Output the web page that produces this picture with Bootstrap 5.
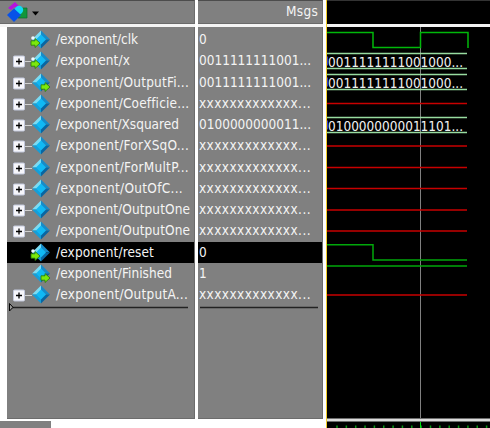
<!DOCTYPE html>
<html lang="en">
<head>
<meta charset="utf-8">
<title>Wave</title>
<link href="https://cdn.jsdelivr.net/npm/bootstrap@5.3.0/dist/css/bootstrap.min.css" rel="stylesheet">
<style>
body{width:490px;height:428px;background:#fff;font-family:"DejaVu Sans Condensed","DejaVu Sans",sans-serif;font-stretch:condensed;font-size:13.5px;color:#f4f4f4}
.pane{background:#808080}
.names{width:195px}
.vals{width:125px;margin-left:3px}
.waves{width:164px;background:#000;border-left:1px solid #f2cd28}
.gap3{width:3px}
.top-bar{height:24px;border-top:1px solid #4c4c4c;border-bottom:1px solid #6a6a6a}
.names .pane,.vals .pane{border-right:1px solid #6c6c6c}
.rule{height:3px;background:#f4f4f4}
.listing{height:392px;border-bottom:1px solid #6c6c6c;padding-top:2px}
.names .listing{margin-left:7px}
.sig{height:21.25px;line-height:20px;white-space:pre}
.sig.active{background:#000}
.names .sig{padding-left:21px}
.vals .sig{padding-left:1px}
.gem{width:27px;height:21px;margin-right:1px;overflow:visible}
.endline{height:9px;margin-top:-2.5px}
.foot{height:9px;padding-top:2px}
.thumb{width:51px;height:7px;background:#808080}
svg{display:block;flex:none}
</style>
<script src="https://cdn.jsdelivr.net/npm/bootstrap@5.3.0/dist/js/bootstrap.bundle.min.js"></script>
</head>
<body class="m-0 overflow-hidden">
<svg width="0" height="0" class="position-absolute">
<defs>
<g id="gem"><path d="M0 9L9 0V6L6 9Z" fill="#7bdcf4"/><path d="M9 0L18 9H12L9 6Z" fill="#168bc8"/><path d="M0 9H6L9 12V18Z" fill="#159ed8"/><path d="M18 9L9 18V12L12 9Z" fill="#0866a2"/><path d="M9 4L14 9L9 14L4 9Z" fill="#10b9f4"/></g>
<path id="arrow" d="M0 2.3H4V0L9 4.5L4 9V6.7H0Z" fill="#7be80c" stroke="#26790b" stroke-width=".8"/>
</defs></svg>
<main class="d-flex h-100">
<section class="names flex-shrink-0">
<header class="pane top-bar d-flex align-items-start">
<svg width="42" height="22"><path d="M8 7L15 1L20 6L17 8L15 6L11 9Z" fill="#b414dc"/><path d="M19 7H27V17H18Z" fill="#12963c" stroke="#0a6d2b" stroke-width=".7"/><circle cx="19" cy="9" r="4.2" fill="#10d9f5"/><path d="M14 7.500L21 14L14 21L7 14Z" fill="#0752e8"/><path d="M32 10.5H39L35.500 14.500Z" fill="#000"/></svg>
</header>
<div class="rule"></div>
<div class="pane listing" id="names"></div>
<div class="foot"><div class="thumb"></div></div>
</section>
<section class="vals flex-shrink-0">
<header class="pane top-bar text-end lh-base pe-1"><span class="fit" data-w="32">Msgs</span></header>
<div class="rule"></div>
<div class="pane listing" id="vals"></div>
</section>
<div class="gap3 flex-shrink-0"></div>
<section class="waves flex-shrink-0"><svg id="wave" width="163" height="428" viewBox="327 0 163 428"></svg></section>
</main>
<script>
const X='xxxxxxxxxxxxx...';
const signals=[
 ['clk',82,'0',8,'in'],['x',74,'0011111111001...',112,'in',1],['OutputFi...',133,'0011111111001...',112,'out',1],
 ['Coefficie...',133,X,112,'',1],['Xsquared',123,'0100000000011...',112,'',1],['ForXSqO...',133,X,112,'',1],
 ['ForMultP...',133,X,112,'',1],['OutOfC...',127,X,112,'',1],['OutputOne',134,X,112,'',1],['OutputOne',134,X,112,'',1],
 ['reset',98,'0',8,'in'],['Finished',116,'1',8,'out'],['OutputA...',132,X,112,'',1]];
let n='',v='';
signals.forEach(([name,w,val,vw,dir,exp],i)=>{
 const on=i===10?' active':'';
 const plus=exp?'<path d="M-3 11.500H4" stroke="#d0d0d0"/><rect x="-14.500" y="6" width="11" height="11" rx="1" fill="#f6f6fb" stroke="#c2c8dc"/><path d="M-12 11.500H-6M-9 8.500V14.500" stroke="#000" stroke-width="1.300"/>':'';
 const arrow=dir==='in'?'<circle cx="5" cy="9" r="1.8" fill="#eefaff"/><use href="#arrow" x="3" y="9.500"/>':dir==='out'?'<use href="#arrow" x="13" y="10.500"/>':'';
 n+=`<div class="sig d-flex${on}"><svg class="gem" viewBox="0 0 27 21">${plus}<use href="#gem" x="4" y="1.500"/>${arrow}</svg><span class="fit" data-w="${w}">/exponent/${name}</span></div>`;
 v+=`<div class="sig${on}"><span class="fit" data-w="${vw}">${val}</span></div>`;
});
document.getElementById('names').innerHTML=n+'<svg class="endline" width="185" height="9"><path d="M3 4.500H181" stroke="#222" stroke-width="1.500"/><path d="M2.500 .5V8L6 4.300Z" fill="#999" stroke="#000"/></svg>';
document.getElementById('vals').innerHTML=v+'<svg class="endline" width="122" height="9"><path d="M2 4.500H120" stroke="#222" stroke-width="1.500"/></svg>';
document.querySelectorAll('.fit').forEach(e=>{const t=e.textContent.length;e.style.letterSpacing=(e.dataset.w-e.getBoundingClientRect().width)/t+'px'});
let s='<path d="M327 .5H492" stroke="#333"/><path d="M420.500 27V418" stroke="#808080"/>';
const line=(d,c,w=1.5)=>`<path d="${d}" fill="none" stroke="${c}" stroke-width="${w}"/>`;
s+=line('M327 32.500H373V47.500H420.500V32.500H468V48','#00b80a');
[[53.5,68.5,'0011111111001000...'],[74.5,89.5,'0011111111001000...'],[117.5,132.5,'0100000000011101...']].forEach(([a,b,t])=>{
 s+=line(`M327 ${a}H467M327 ${b}H467`,'#98dca0',1.3)+`<rect x="326" y="${a+3}" width="2" height="9" fill="#3838c0"/><text x="328" y="${b-2}" textLength="135" fill="#f2f2f2" font-size="13.5">${t}</text>`;
});
[103.5,146,167.5,188.5,210,231,295].forEach(y=>s+=line(`M327 ${y}H467`,'#c80000'));
s+=line('M327 244.800H373V260H467','#00a80a')+line('M327 266H467','#00a80a');
s+='<rect x="327" y="24" width="165" height="3" fill="#f2f2f2"/><rect x="327" y="418.500" width="165" height="3" fill="#dcdcdc"/>';
for(let i=0;i<17;i++)s+=line(`M${337+i*9.35} 425.500V428`,'#0a9a14');
s+=line('M420.500 422V428','#00e010',1);
document.getElementById('wave').innerHTML=s;
</script>
</body>
</html>
